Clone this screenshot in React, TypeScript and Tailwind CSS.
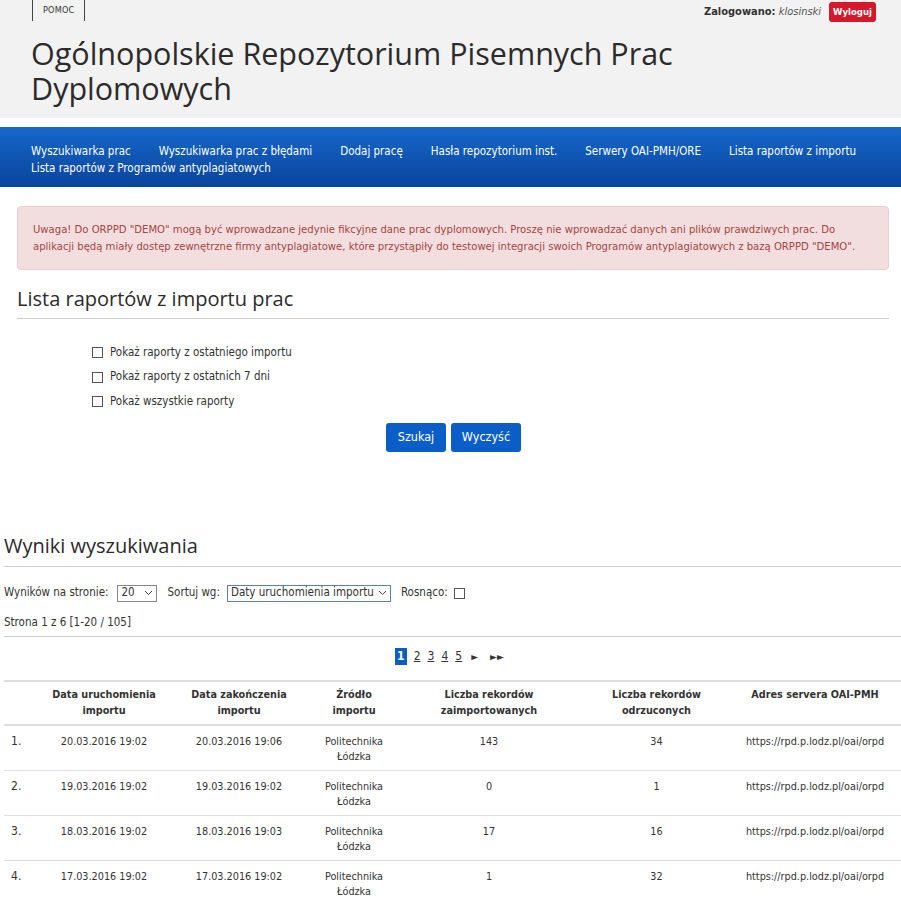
import React from 'react'

const navItems = [
  'Wyszukiwarka prac',
  'Wyszukiwarka prac z błędami',
  'Dodaj pracę',
  'Hasła repozytorium inst.',
  'Serwery OAI-PMH/ORE',
  'Lista raportów z importu',
  'Lista raportów z Programów antyplagiatowych',
]

const rows = [
  ['20.03.2016 19:02', '20.03.2016 19:06', '143', '34'],
  ['19.03.2016 19:02', '19.03.2016 19:02', '0', '1'],
  ['18.03.2016 19:02', '18.03.2016 19:03', '17', '16'],
  ['17.03.2016 19:02', '17.03.2016 19:02', '1', '32'],
]

function Box() {
  return <span className="inline-block w-[11px] h-[11px] border border-[#555] bg-white" />
}

export default function App() {
  return (
    <div className="min-h-screen bg-white text-[#333] font-['DejaVu_Sans_Condensed','Liberation_Sans',sans-serif] text-[11.5px]">
      {/* header */}
      <header className="bg-[#f2f2f2] h-[118px]">
        <div className="flex items-start justify-between pl-[32px] pr-[25px]">
          <div className="flex items-center h-[21px] border-l border-r border-[#444] px-[10px] text-[9px] tracking-wide">
            POMOC
          </div>
          <div className="flex items-center gap-[8px] pt-[2px]">
            <span className="text-[11px]">
              <b>Zalogowano:</b> <i className="text-[#555]">klosinski</i>
            </span>
            <span className="bg-[#d7182a] text-white text-[9.5px] rounded-[3px] px-[4px] h-[20px] flex items-center font-bold">Wyloguj</span>
          </div>
        </div>
        <h1 className="pl-[31px] mt-[14px] max-w-[720px] text-[30.5px] leading-[35px] text-[#2b2b2b] font-['Open_Sans',sans-serif]">
          Ogólnopolskie Repozytorium Pisemnych Prac Dyplomowych
        </h1>
      </header>

      {/* nav */}
      <nav className="mt-[9px] h-[60px] bg-gradient-to-b from-[#1668cb] to-[#0a449c] px-[31px] pt-[16px]">
        <ul className="flex flex-wrap gap-x-[28px] leading-[17px] text-white">
          {navItems.map((n) => (
            <li key={n}>{n}</li>
          ))}
        </ul>
      </nav>

      {/* alert */}
      <div className="ml-[17px] mr-[12px] mt-[19px] rounded-[4px] border border-[#ebccd1] bg-[#f2dede] text-[#a94442] text-[11.2px] px-[15px] py-[14px] leading-[17px]">
        Uwaga! Do ORPPD "DEMO" mogą być wprowadzane jedynie fikcyjne dane prac dyplomowych. Proszę nie wprowadzać danych ani plików prawdziwych prac. Do aplikacji będą miały dostęp zewnętrzne firmy antyplagiatowe, które przystąpiły do testowej integracji swoich Programów antyplagiatowych z bazą ORPPD "DEMO".
      </div>

      <h2 className="ml-[17px] mr-[12px] mt-[15px] pb-[5px] border-b border-[#ccc] text-[20px] leading-[28px] font-['Open_Sans',sans-serif] text-[#2b2b2b]">
        Lista raportów z importu prac
      </h2>

      <div className="pl-[92px] mt-[25px] flex flex-col gap-[7.5px]">
        {['Pokaż raporty z ostatniego importu', 'Pokaż raporty z ostatnich 7 dni', 'Pokaż wszystkie raporty'].map((t) => (
          <label key={t} className="flex items-center gap-[7px] h-[17px]">
            <Box />
            <span>{t}</span>
          </label>
        ))}
      </div>

      <div className="flex justify-center gap-[5px] mt-[13px] pl-[6px]">
        <button className="bg-[#0b5ec8] text-white text-[12.5px] rounded-[3px] w-[60px] h-[29px]">Szukaj</button>
        <button className="bg-[#0b5ec8] text-white text-[12.5px] rounded-[3px] w-[70px] h-[29px]">Wyczyść</button>
      </div>

      {/* results */}
      <h2 className="ml-[4px] mt-[80px] pb-[6px] border-b border-[#ccc] text-[20px] leading-[28px] font-['Open_Sans',sans-serif] text-[#2b2b2b]">
        Wyniki wyszukiwania
      </h2>

      <div className="ml-[4px] mt-[17px] flex items-center h-[18px]">
        <span>Wyników na stronie:</span>
        <span className="ml-[9px] flex items-center justify-between w-[40px] h-[17px] border border-[#888] px-[3px]">
          20
          <svg width="9" height="6" viewBox="0 0 9 6"><path d="M1 1l3.5 3.5L8 1" fill="none" stroke="#444" /></svg>
        </span>
        <span className="ml-[10px]">Sortuj wg:</span>
        <span className="ml-[7px] flex items-center justify-between w-[164px] h-[17px] border border-[#5a7fb8] px-[3px] whitespace-nowrap overflow-hidden">
          Daty uruchomienia importu
          <svg width="9" height="6" viewBox="0 0 9 6" className="shrink-0"><path d="M1 1l3.5 3.5L8 1" fill="none" stroke="#444" /></svg>
        </span>
        <span className="ml-[10px]">Rosnąco:</span>
        <span className="ml-[6px] flex"><Box /></span>
      </div>

      <div className="ml-[4px] mt-[12px] pb-[5px] border-b border-[#ccc]">Strona 1 z 6 [1-20 / 105]</div>

      <div className="flex justify-center items-center gap-[7px] mt-[10px] mr-[2px] text-[12px]">
        <span className="bg-[#0b5ec8] text-white font-bold px-[2px] leading-[17px]">1</span>
        {['2', '3', '4', '5'].map((p) => (
          <span key={p} className="underline">{p}</span>
        ))}
        <span className="text-[10px] ml-[2px]">►</span>
        <span className="text-[10px] ml-[5px]">►►</span>
      </div>

      <table className="ml-[4px] mt-[15px] w-[897px] border-t-2 border-[#ddd] text-[10.75px]">
        <thead>
          <tr className="border-b-2 border-[#ddd] font-bold">
            <th className="w-[40px]" />
            <th className="w-[120px] py-[5px] leading-[16px]">Data uruchomienia<br />importu</th>
            <th className="w-[150px] leading-[16px]">Data zakończenia<br />importu</th>
            <th className="w-[80px] leading-[16px]">Źródło<br />importu</th>
            <th className="w-[190px] leading-[16px]">Liczba rekordów<br />zaimportowanych</th>
            <th className="w-[145px] leading-[16px]">Liczba rekordów<br />odrzuconych</th>
            <th className="leading-[16px] align-top pt-[5px]">Adres servera OAI-PMH</th>
          </tr>
        </thead>
        <tbody>
          {rows.map((r, i) => (
            <tr key={i} className="border-b border-[#ddd] align-top h-[45px]">
              <td className="pl-[7px] pt-[6px] text-[12px]">{i + 1}.</td>
              <td className="text-center pt-[8px]">{r[0]}</td>
              <td className="text-center pt-[8px]">{r[1]}</td>
              <td className="text-center pt-[8px] leading-[15px]">Politechnika<br />Łódzka</td>
              <td className="text-center pt-[8px]">{r[2]}</td>
              <td className="text-center pt-[8px]">{r[3]}</td>
              <td className="text-center pt-[8px]">https://rpd.p.lodz.pl/oai/orpd</td>
            </tr>
          ))}
        </tbody>
      </table>
    </div>
  )
}
